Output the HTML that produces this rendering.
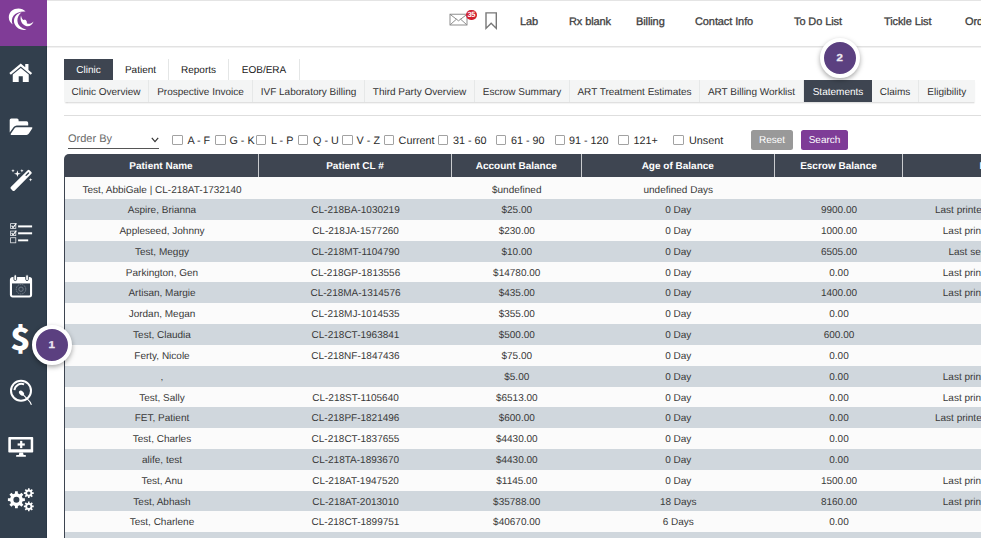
<!DOCTYPE html>
<html lang="en">
<head>
<meta charset="utf-8">
<title>Statements</title>
<style>
*{box-sizing:border-box;margin:0;padding:0}
html,body{text-rendering:geometricPrecision;width:981px;height:538px;overflow:hidden;background:#fff;font-family:"Liberation Sans",sans-serif;color:#333}
body{position:relative}
.abs{position:absolute}
#side{left:0;top:0;width:47px;height:538px;background:#323f4d;border-right:1px solid #2a3847}
#logo{left:0;top:0;width:47px;height:46px;background:#803c97}
#topbar{left:47px;top:0;width:934px;height:47px;background:#fff;border-top:1px solid #e4e4e4;border-bottom:1px solid #e2e2e2;box-shadow:0 1px 0 #f1f1f1}
.nav{position:absolute;top:15px;font-size:11px;letter-spacing:-0.1px;line-height:14px;color:#404040;-webkit-text-stroke:0.3px #404040;white-space:nowrap}
.ico{position:absolute;left:0;width:47px;text-align:center}
.tabs1{left:64px;top:59px;height:21px;display:flex;font-size:10px;line-height:23px;color:#222}
.tabs1 div{border-right:1px solid #e4e6e6;text-align:center;white-space:nowrap}
.tabs1 .on{background:#3e4551;color:#fff;border-right:none}
.tabs2{left:64px;top:80px;height:22px;width:910.5px;background:#f4f5f5;font-size:10px;line-height:25px;color:#333;box-shadow:0 1.5px 1.5px -0.5px rgba(0,0,0,.2)}
.tabs2 div{position:absolute;top:0;height:22px;border-right:1px solid #e6e8e8;text-align:center;white-space:nowrap}
.tabs2 .on{background:#3e4551;color:#fff;border-right:none}
#hr{left:64px;top:115px;width:917px;height:1px;background:#dedede}
.cb{position:absolute;top:134.8px;width:10.6px;height:10.6px;border:1px solid #a2a2a2;border-radius:1px;background:#fff}
.lb{position:absolute;top:134px;font-size:10.8px;line-height:14px;color:#2b2b2b;white-space:nowrap}
.btn{position:absolute;top:130.2px;height:19.8px;border-radius:2.5px;color:#fff;font-size:10px;line-height:21.5px;text-align:center}
#tbl{left:64px;top:154.3px;width:1100px}
#thead{display:flex;height:22.6px;background:#3e4551;color:#fff;font-weight:bold;font-size:10px;line-height:26px;border-top-left-radius:5px}
#thead div{flex:none;text-align:center;border-right:1px solid #c9cbce;height:22.6px}
.r{border-left:1px solid #3d4450;display:flex;height:20.82px;font-size:10px;line-height:24.4px;color:#393939;background:#fbfbfb}
.r.e{background:#d0d7dd}
.r.first{height:22.3px;line-height:27px}
.r div{text-align:center;white-space:nowrap;flex:none}
.c1{width:195px}.r .c1{width:194px}.c2{width:193px}.c3{width:129.5px}.c4{width:193.5px}.c5{width:128px}.c6{width:262px;text-align:left !important}
.badge{position:absolute;width:40px;height:40px;border-radius:50%;background:#5b4080;border:4px solid #fff;box-shadow:0 2px 5px rgba(0,0,0,.35);color:#ece8f2;font-size:10px;font-weight:bold;line-height:33.5px;text-align:center}
.badge span{display:inline-block;transform:scaleX(1.15);-webkit-text-stroke:0.3px #ece8f2}
</style>
</head>
<body>
<div id="side" class="abs"></div>
<div id="logo" class="abs"></div>
<div id="topbar" class="abs"></div>
<div id="icons">
<svg class="abs" style="left:0;top:0" width="47" height="46" viewBox="0 0 47 46"><g fill="#fff">
<path d="M25.6 11.6 C20.5 5.8 8.6 8.6 8.8 17.6 C8.9 20.6 10.4 23.1 12.6 24.4 C10.2 18.6 13.5 11.2 25.6 11.6Z"/>
<path d="M21.6 12.2 C15.6 13.6 12.6 19 14.6 24 C16.6 28.8 22 30.8 26.6 29.6 C21.6 28.8 17.6 25.6 17.4 20.6 C17.3 17.4 19 14.4 21.6 12.2Z"/>
<path d="M21 15.6 C19.6 20 21.6 24.6 26 26 C29.2 27 32.2 25 33.6 21.4 C31.2 24 28.6 24.4 26.8 23.2 C27.2 21.6 26.4 20 24.6 19.4 C23.8 20.4 22.6 20 22 18.6 C21.6 17.8 21.3 16.8 21 15.6Z"/>
</g></svg>
<svg class="abs" style="left:8.800px;top:63px" width="23.500" height="19.500" viewBox="0 0 24 20"><g fill="#fff">
<path d="M0.300 10.300 L12 0.500 L16.600 4.350 V0.900 H19.900 V7.100 L23.700 10.300 L22.200 12.100 L12 3.500 L1.800 12.100Z"/>
<path d="M3.800 11.900 L12 5.100 L20.200 11.900 V19.500 H14.100 V13.700 H9.900 V19.500 H3.800Z"/>
</g></svg>
<svg class="abs" style="left:9px;top:117.500px" width="24" height="17" viewBox="0 0 24 17"><g fill="#fff">
<path d="M0.700 2 Q0.700 0.400 2.300 0.400 H8 Q9.600 0.400 9.600 2 V3.300 H17.600 Q19.200 3.300 19.200 4.900 V7.600 H7.800 Q5.800 7.600 4.700 9.100 L0.700 14.600Z"/>
<path d="M7.400 9.200 H22.600 Q23.900 9.200 23.200 10.400 L19.900 15.600 Q19.100 16.900 17.500 16.900 H2.300 Q1.100 16.900 1.800 15.800 L5.400 10.400 Q6.200 9.200 7.400 9.200Z"/>
</g></svg>
<svg class="abs" style="left:9px;top:168px" width="25" height="25" viewBox="0 0 25 25"><g fill="#fff">
<rect x="-13.200" y="-2.600" width="26.400" height="5.200" rx="1.300" transform="translate(12.100 12.400) rotate(-45)"/>
<path d="M8.4 2.3000000000000003 L9.200000000000001 4.9 L11.8 5.7 L9.200000000000001 6.5 L8.4 9.1 L7.6000000000000005 6.5 L5.0 5.7 L7.6000000000000005 4.9Z"/>
<path d="M4.0 1.0000000000000002 L4.45 2.25 L5.7 2.7 L4.45 3.1500000000000004 L4.0 4.4 L3.55 3.1500000000000004 L2.3 2.7 L3.55 2.25Z"/>
<path d="M12.9 1.0000000000000002 L13.35 2.25 L14.6 2.7 L13.35 3.1500000000000004 L12.9 4.4 L12.450000000000001 3.1500000000000004 L11.200000000000001 2.7 L12.450000000000001 2.25Z"/>
<path d="M21.6 9.899999999999999 L22.05 11.25 L23.400000000000002 11.7 L22.05 12.149999999999999 L21.6 13.5 L21.150000000000002 12.149999999999999 L19.8 11.7 L21.150000000000002 11.25Z"/>
</g><rect x="6.400" y="-0.700" width="4.800" height="1.400" rx="0.700" transform="translate(12.100 12.400) rotate(-45)" fill="#323f4d"/></svg>
<svg class="abs" style="left:9px;top:222px" width="25" height="23" viewBox="0 0 25 23"><g fill="none" stroke="#e4e7ea" stroke-width="0.800">
<rect x="1.600" y="1.600" width="5.200" height="4.800"/><rect x="1.600" y="9.100" width="5.200" height="4.500"/><rect x="1.600" y="15.700" width="5.200" height="5.100"/>
<path d="M2.600 3.600 L4 5.500 L7.400 1.300" stroke="#fff" stroke-width="1.100"/><path d="M2.600 10.900 L4 12.800 L7.400 8.600" stroke="#fff" stroke-width="1.100"/>
</g><g fill="#fff"><rect x="9.100" y="3.400" width="14" height="2"/><rect x="9.100" y="10.300" width="14" height="2"/><rect x="9.100" y="17.400" width="10.100" height="1.900"/></g></svg>
<svg class="abs" style="left:9px;top:274px" width="25" height="24" viewBox="0 0 25 24">
<rect x="1.950" y="4.050" width="20.100" height="18.400" rx="1.700" fill="none" stroke="#fff" stroke-width="2.100"/>
<rect x="1.950" y="4.050" width="20.100" height="5.400" fill="#fff"/>
<rect x="4.900" y="0.700" width="2.700" height="5.900" rx="1.300" fill="#fff" stroke="#323f4d" stroke-width="0.900"/>
<rect x="16.700" y="0.700" width="2.700" height="5.900" rx="1.300" fill="#fff" stroke="#323f4d" stroke-width="0.900"/>
<circle cx="12" cy="15.200" r="4.800" fill="none" stroke="#76808c" stroke-width="0.900" stroke-dasharray="1.600 0.700"/><circle cx="12" cy="15.200" r="2.200" fill="none" stroke="#76808c" stroke-width="0.900"/>
</svg>
<div class="abs" style="left:0;top:315px;width:41px;text-align:center;font-family:'Noto Sans CJK SC','Liberation Sans',sans-serif;font-size:30.500px;font-weight:900;line-height:46px;color:#fff;transform:translateY(-0.6px) scaleX(1.1)">$</div>
<svg class="abs" style="left:9px;top:379px" width="26" height="28" viewBox="0 0 26 28"><g fill="none" stroke="#fff">
<circle cx="12" cy="11.700" r="10" stroke-width="2"/>
<path d="M5.400 11.100 A7 7 0 0 1 15.100 5.400" stroke-width="1.900"/>
<path d="M14.300 15.800 L18.400 20.100 Q21.400 22.600 22.400 25.800" stroke-width="1.100"/>
</g><ellipse cx="12.500" cy="14.100" rx="3" ry="2" transform="rotate(45 12.500 14.100)" fill="#fff"/></svg>
<svg class="abs" style="left:8px;top:436px" width="27" height="22" viewBox="0 0 27 22"><g fill="#fff">
<path fill-rule="evenodd" d="M1.100 0.900 H24.400 Q25.200 0.900 25.200 1.700 V15.700 Q25.200 16.500 24.400 16.500 H1.100 Q0.300 16.500 0.300 15.700 V1.700 Q0.300 0.900 1.100 0.900Z M2.900 3.500 V13.300 H22.700 V3.500Z"/>
<rect x="12.100" y="4.900" width="2.200" height="7.200"/><rect x="9.600" y="7.400" width="7.200" height="2.200"/>
<path d="M11.400 16.400 H15 L15.600 18.900 H17.300 Q17.900 18.900 17.900 19.500 V20.200 Q17.900 20.800 17.300 20.800 H8.700 Q8.100 20.800 8.100 20.200 V19.500 Q8.100 18.900 8.700 18.900 H10.800Z"/></g></svg>
<svg class="abs" style="left:0;top:470px" width="47" height="60" viewBox="0 0 47 60"><path fill="#fff" fill-rule="evenodd" d="M24.89 28.35 L24.89 31.05 L22.62 31.19 L21.86 33.04 L23.36 34.75 L21.45 36.66 L19.74 35.16 L17.89 35.92 L17.75 38.19 L15.05 38.19 L14.91 35.92 L13.06 35.16 L11.35 36.66 L9.44 34.75 L10.94 33.04 L10.18 31.19 L7.91 31.05 L7.91 28.35 L10.18 28.21 L10.94 26.36 L9.44 24.65 L11.35 22.74 L13.06 24.24 L14.91 23.48 L15.05 21.21 L17.75 21.21 L17.89 23.48 L19.74 24.24 L21.45 22.74 L23.36 24.65 L21.86 26.36 L22.62 28.21Z M19.40 29.70 A3.0 3.0 0 1 0 13.40 29.70 A3.0 3.0 0 1 0 19.40 29.70Z M33.74 22.32 L33.74 23.88 L32.30 23.94 L31.87 24.98 L32.85 26.04 L31.74 27.15 L30.68 26.17 L29.64 26.60 L29.58 28.04 L28.02 28.04 L27.96 26.60 L26.92 26.17 L25.86 27.15 L24.75 26.04 L25.73 24.98 L25.30 23.94 L23.86 23.88 L23.86 22.32 L25.30 22.26 L25.73 21.22 L24.75 20.16 L25.86 19.05 L26.92 20.03 L27.96 19.60 L28.02 18.16 L29.58 18.16 L29.64 19.60 L30.68 20.03 L31.74 19.05 L32.85 20.16 L31.87 21.22 L32.30 22.26Z M30.50 23.10 A1.7 1.7 0 1 0 27.10 23.10 A1.7 1.7 0 1 0 30.50 23.10Z M33.74 35.62 L33.74 37.18 L32.30 37.24 L31.87 38.28 L32.85 39.34 L31.74 40.45 L30.68 39.47 L29.64 39.90 L29.58 41.34 L28.02 41.34 L27.96 39.90 L26.92 39.47 L25.86 40.45 L24.75 39.34 L25.73 38.28 L25.30 37.24 L23.86 37.18 L23.86 35.62 L25.30 35.56 L25.73 34.52 L24.75 33.46 L25.86 32.35 L26.92 33.33 L27.96 32.90 L28.02 31.46 L29.58 31.46 L29.64 32.90 L30.68 33.33 L31.74 32.35 L32.85 33.46 L31.87 34.52 L32.30 35.56Z M30.50 36.40 A1.7 1.7 0 1 0 27.10 36.40 A1.7 1.7 0 1 0 30.50 36.40Z"/></svg>
</div>


<svg class="abs" style="left:449px;top:13px" width="20" height="14" viewBox="0 0 20 14"><g fill="none" stroke="#7a7a7a" stroke-width="0.85">
<rect x="1" y="1.200" width="17" height="10.800"/><path d="M1.400 1.600 L9.500 7.800 L17.600 1.600"/><path d="M1.400 11.600 L7.400 6.200 M17.600 11.600 L11.600 6.200"/></g></svg>
<div class="abs" style="left:466px;top:9.500px;width:10.500px;height:10.500px;border-radius:50%;background:#d0202e;color:#fff;font-size:7.500px;font-weight:bold;line-height:10.500px;text-align:center;letter-spacing:-0.3px">35</div>
<svg class="abs" style="left:484px;top:11px" width="14" height="20" viewBox="0 0 14 20"><path d="M2 1.900 H12.300 V17.400 L7.150 12.200 L2 17.400Z" fill="none" stroke="#777" stroke-width="1.400" stroke-linejoin="miter"/></svg>
<div class="nav" style="left:520px">Lab</div>
<div class="nav" style="left:569px">Rx blank</div>
<div class="nav" style="left:636px">Billing</div>
<div class="nav" style="left:695px">Contact Info</div>
<div class="nav" style="left:794px">To Do List</div>
<div class="nav" style="left:884px">Tickle List</div>
<div class="nav" style="left:965px">Orders</div>

<div class="abs tabs1">
<div class="on" style="width:49px">Clinic</div><div style="width:56px">Patient</div><div style="width:60px">Reports</div><div style="width:71px">EOB/ERA</div>
</div>
<div class="abs tabs2">
<div style="left:0;width:85px">Clinic Overview</div>
<div style="left:85px;width:104px">Prospective Invoice</div>
<div style="left:189px;width:112px">IVF Laboratory Billing</div>
<div style="left:301px;width:110px">Third Party Overview</div>
<div style="left:411px;width:95px">Escrow Summary</div>
<div style="left:506px;width:130px">ART Treatment Estimates</div>
<div style="left:636px;width:104px">ART Billing Worklist</div>
<div class="on" style="left:740px;width:68px">Statements</div>
<div style="left:808px;width:47px">Claims</div>
<div style="left:855px;width:55.500px;border-right:none">Eligibility</div>
</div>
<div id="hr" class="abs"></div>

<div id="filters">
<div class="abs" id="sel" style="left:68px;top:131px;width:91px;height:18px;border-bottom:1px solid #555;font-size:11px;line-height:16px;color:#6a6a6a">Order By<svg class="abs" style="right:0px;top:5.5px" width="8" height="6" viewBox="0 0 8 6"><path d="M0.8 0.800 L4 4.600 L7.200 0.800" fill="none" stroke="#333" stroke-width="1.200"/></svg></div>
<div class="cb" style="left:172px"></div><div class="lb" style="left:187.4px">A - F</div>
<div class="cb" style="left:215px"></div><div class="lb" style="left:229.4px">G - K</div>
<div class="cb" style="left:255.5px"></div><div class="lb" style="left:271px">L - P</div>
<div class="cb" style="left:297.7px"></div><div class="lb" style="left:313px">Q - U</div>
<div class="cb" style="left:342.3px"></div><div class="lb" style="left:356.6px">V - Z</div>
<div class="cb" style="left:383.7px"></div><div class="lb" style="left:398.6px">Current</div>
<div class="cb" style="left:437.7px"></div><div class="lb" style="left:453px">31 - 60</div>
<div class="cb" style="left:495.7px"></div><div class="lb" style="left:511px">61 - 90</div>
<div class="cb" style="left:554.6px"></div><div class="lb" style="left:569px">91 - 120</div>
<div class="cb" style="left:618px"></div><div class="lb" style="left:633.4px">121+</div>
<div class="cb" style="left:673px"></div><div class="lb" style="left:689px">Unsent</div>
<div class="btn" style="left:751px;width:42px;background:#999">Reset</div>
<div class="btn" style="left:801px;width:47px;background:#7e3c97">Search</div>
</div>

<div id="tbl" class="abs">
<div id="thead"><div class="c1">Patient Name</div><div class="c2">Patient CL #</div><div class="c3">Account Balance</div><div class="c4">Age of Balance</div><div class="c5">Escrow Balance</div><div class="c6" style="border-right:none;padding-left:76.400px">Details</div></div>
<div class="r first"><div class="c1">Test, AbbiGale | CL-218AT-1732140</div><div class="c2"></div><div class="c3">$undefined</div><div class="c4">undefined Days</div><div class="c5"></div><div class="c6"></div></div>
<div class="r e"><div class="c1">Aspire, Brianna</div><div class="c2">CL-218BA-1030219</div><div class="c3">$25.00</div><div class="c4">0 Day</div><div class="c5">9900.00</div><div class="c6" style="padding-left:32px">Last printed on 05/12/2020</div></div>
<div class="r"><div class="c1">Appleseed, Johnny</div><div class="c2">CL-218JA-1577260</div><div class="c3">$230.00</div><div class="c4">0 Day</div><div class="c5">1000.00</div><div class="c6" style="padding-left:39.800px">Last printed on 5/2/2020</div></div>
<div class="r e"><div class="c1">Test, Meggy</div><div class="c2">CL-218MT-1104790</div><div class="c3">$10.00</div><div class="c4">0 Day</div><div class="c5">6505.00</div><div class="c6" style="padding-left:45.500px">Last sent on 5/2/2020</div></div>
<div class="r"><div class="c1">Parkington, Gen</div><div class="c2">CL-218GP-1813556</div><div class="c3">$14780.00</div><div class="c4">0 Day</div><div class="c5">0.00</div><div class="c6" style="padding-left:39.800px">Last printed on 5/2/2020</div></div>
<div class="r e"><div class="c1">Artisan, Margie</div><div class="c2">CL-218MA-1314576</div><div class="c3">$435.00</div><div class="c4">0 Day</div><div class="c5">1400.00</div><div class="c6" style="padding-left:39.800px">Last printed on 5/2/2020</div></div>
<div class="r"><div class="c1">Jordan, Megan</div><div class="c2">CL-218MJ-1014535</div><div class="c3">$355.00</div><div class="c4">0 Day</div><div class="c5">0.00</div><div class="c6"></div></div>
<div class="r e"><div class="c1">Test, Claudia</div><div class="c2">CL-218CT-1963841</div><div class="c3">$500.00</div><div class="c4">0 Day</div><div class="c5">600.00</div><div class="c6"></div></div>
<div class="r"><div class="c1">Ferty, Nicole</div><div class="c2">CL-218NF-1847436</div><div class="c3">$75.00</div><div class="c4">0 Day</div><div class="c5">0.00</div><div class="c6"></div></div>
<div class="r e"><div class="c1">,</div><div class="c2"></div><div class="c3">$5.00</div><div class="c4">0 Day</div><div class="c5">0.00</div><div class="c6" style="padding-left:39.800px">Last printed on 5/2/2020</div></div>
<div class="r"><div class="c1">Test, Sally</div><div class="c2">CL-218ST-1105640</div><div class="c3">$6513.00</div><div class="c4">0 Day</div><div class="c5">0.00</div><div class="c6" style="padding-left:39.800px">Last printed on 5/2/2020</div></div>
<div class="r e"><div class="c1">FET, Patient</div><div class="c2">CL-218PF-1821496</div><div class="c3">$600.00</div><div class="c4">0 Day</div><div class="c5">0.00</div><div class="c6" style="padding-left:32px">Last printed on 05/12/2020</div></div>
<div class="r"><div class="c1">Test, Charles</div><div class="c2">CL-218CT-1837655</div><div class="c3">$4430.00</div><div class="c4">0 Day</div><div class="c5">0.00</div><div class="c6"></div></div>
<div class="r e"><div class="c1">alife, test</div><div class="c2">CL-218TA-1893670</div><div class="c3">$4430.00</div><div class="c4">0 Day</div><div class="c5">0.00</div><div class="c6"></div></div>
<div class="r"><div class="c1">Test, Anu</div><div class="c2">CL-218AT-1947520</div><div class="c3">$1145.00</div><div class="c4">0 Day</div><div class="c5">1500.00</div><div class="c6" style="padding-left:39.800px">Last printed on 5/2/2020</div></div>
<div class="r e"><div class="c1">Test, Abhash</div><div class="c2">CL-218AT-2013010</div><div class="c3">$35788.00</div><div class="c4">18 Days</div><div class="c5">8160.00</div><div class="c6" style="padding-left:39.800px">Last printed on 5/2/2020</div></div>
<div class="r"><div class="c1">Test, Charlene</div><div class="c2">CL-218CT-1899751</div><div class="c3">$40670.00</div><div class="c4">6 Days</div><div class="c5">0.00</div><div class="c6"></div></div>
<div class="r e"><div class="c1"></div><div class="c2"></div><div class="c3"></div><div class="c4"></div><div class="c5"></div><div class="c6"></div></div>
</div>

<div class="badge" style="left:32px;top:325.2px"><span>1</span></div>
<div class="badge" style="left:819.8px;top:37.700px"><span>2</span></div>
</body>
</html>
